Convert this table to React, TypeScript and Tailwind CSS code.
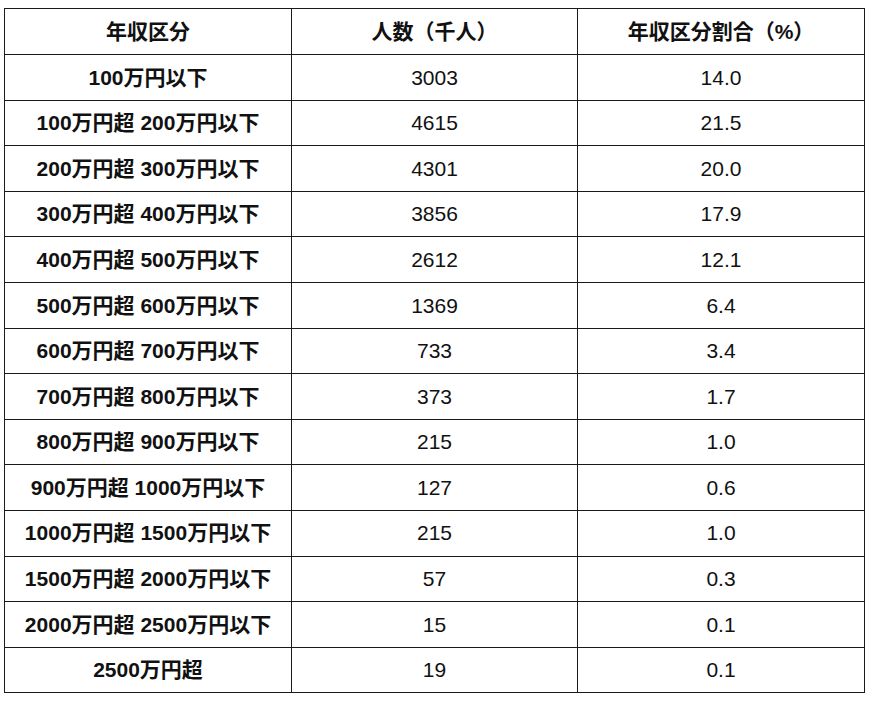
const rows: [string, string, string][] = [
  ["100万円以下", "3003", "14.0"],
  ["100万円超 200万円以下", "4615", "21.5"],
  ["200万円超 300万円以下", "4301", "20.0"],
  ["300万円超 400万円以下", "3856", "17.9"],
  ["400万円超 500万円以下", "2612", "12.1"],
  ["500万円超 600万円以下", "1369", "6.4"],
  ["600万円超 700万円以下", "733", "3.4"],
  ["700万円超 800万円以下", "373", "1.7"],
  ["800万円超 900万円以下", "215", "1.0"],
  ["900万円超 1000万円以下", "127", "0.6"],
  ["1000万円超 1500万円以下", "215", "1.0"],
  ["1500万円超 2000万円以下", "57", "0.3"],
  ["2000万円超 2500万円以下", "15", "0.1"],
  ["2500万円超", "19", "0.1"],
];

export default function App() {
  return (
    <div
      className="w-[870px] h-[706px] bg-white pl-[4px] pt-[8px] text-[#111]"
      style={{ fontFamily: '"Liberation Sans", "Noto Sans CJK JP", sans-serif' }}
    >
      <table className="w-[860px] table-fixed border-collapse border border-[#333] text-[21px]">
        <colgroup>
          <col className="w-[287px]" />
          <col className="w-[286px]" />
          <col className="w-[287px]" />
        </colgroup>
        <thead>
          <tr className="h-[46px]">
            <th className="border border-[#1a1a1a] text-center font-bold p-0">年収区分</th>
            <th className="border border-[#1a1a1a] text-center font-bold p-0">人数（千人）</th>
            <th className="border border-[#1a1a1a] text-center font-bold p-0">年収区分割合（%）</th>
          </tr>
        </thead>
        <tbody>
          {rows.map(([label, count, pct]) => (
            <tr key={label} className="h-[45.6px]">
              <td className="border border-[#1a1a1a] text-center font-bold p-0 whitespace-nowrap">{label}</td>
              <td className="border border-[#1a1a1a] text-center p-0">{count}</td>
              <td className="border border-[#1a1a1a] text-center p-0">{pct}</td>
            </tr>
          ))}
        </tbody>
      </table>
    </div>
  );
}
